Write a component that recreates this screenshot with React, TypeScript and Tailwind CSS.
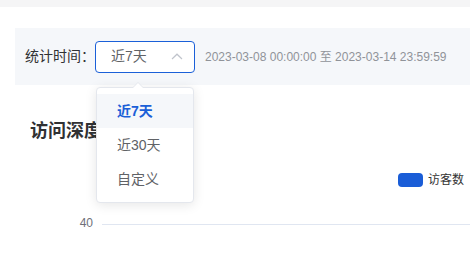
const FONT = "font-['Liberation_Sans','Noto_Sans_CJK_SC',sans-serif]";

const ChevronUp = () => (
  <svg width="12" height="7" viewBox="0 0 12 7" fill="none" className="shrink-0">
    <path d="M1 6L6 1.2L11 6" stroke="#c0c4cc" strokeWidth="1.2" />
  </svg>
);

const OPTIONS = ['近7天', '近30天', '自定义'];

export default function App() {
  return (
    <div className={`relative h-[254px] w-[470px] overflow-hidden bg-white ${FONT}`}>
      <div className="h-[7px] bg-[#f5f5f6]" />

      <div className="pl-[15px] pt-[21px]">
        <div className="flex h-[57px] items-center bg-[#f5f7fa] pl-[10px]">
          <span className="text-[14px] text-[#303133]">统计时间：</span>
          <div className="relative">
            <div className="flex h-[32px] w-[100px] items-center justify-between rounded-[4px] border border-[#1b60d8] bg-white pl-[15px] pr-[11px] text-[14px] text-[#606266]">
              <span>近7天</span>
              <ChevronUp />
            </div>

            <div className="absolute left-[1px] top-[46px] z-10 w-[98px] rounded-[4px] border border-[#e4e7ed] bg-white py-[6px] shadow-[0_2px_12px_0_rgba(0,0,0,0.1)]">
              <div className="absolute -top-[6px] left-[35px] h-0 w-0 border-x-[6px] border-b-[6px] border-x-transparent border-b-[#e4e7ed]" />
              <div className="absolute -top-[5px] left-[35px] h-0 w-0 border-x-[6px] border-b-[6px] border-x-transparent border-b-white" />
              {OPTIONS.map((o, i) => (
                <div
                  key={o}
                  className={
                    i === 0
                      ? 'h-[34px] bg-[#f5f7fa] px-[20px] text-[14px] font-bold leading-[34px] text-[#1b60d8]'
                      : 'h-[34px] px-[20px] text-[14px] leading-[34px] text-[#606266]'
                  }
                >
                  {o}
                </div>
              ))}
            </div>
          </div>
          <span className="ml-[10px] text-[12px] text-[#909399]">
            2023-03-08 00:00:00 至 2023-03-14 23:59:59
          </span>
        </div>
      </div>

      <h3 className="mt-[34px] pl-[30px] text-[18px] font-bold leading-[24px] text-[#303133]">访问深度</h3>

      <div className="mt-[30px] flex items-center justify-end gap-[5px] pr-[6px]">
        <span className="h-[14px] w-[25px] rounded-[4px] bg-[#1a5dd7]" />
        <span className="text-[12px] leading-[14px] text-[#333]">访客数</span>
      </div>

      <div className="mt-[29px] flex items-center">
        <span className="w-[93px] text-right text-[12px] leading-[14px] text-[#6e7079]">40</span>
        <div className="ml-[9px] mt-[2px] h-px flex-1 bg-[#e0e6f1]" />
      </div>
    </div>
  );
}
